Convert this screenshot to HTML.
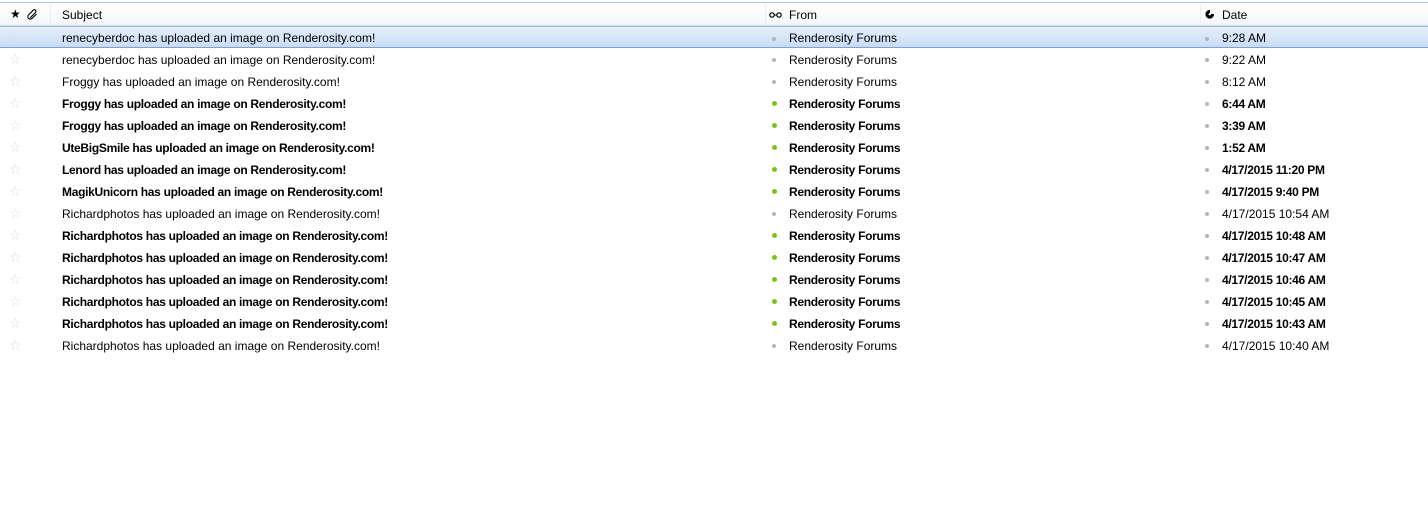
<!DOCTYPE html>
<html><head><meta charset="utf-8"><style>
body{margin:0;width:1428px;height:522px;background:#fff;font-family:"Liberation Sans",sans-serif;font-size:12px;color:#000;overflow:hidden;position:relative}
.top{position:absolute;left:0;top:0;width:1428px;height:2px;background:#fff;border-bottom:1px solid #a9c1dd}
.hdr{position:absolute;left:0;top:3px;width:1428px;height:22px;background:linear-gradient(#fff,#f4f6f9);border-bottom:1px solid #d5dbe3}
.sep{position:absolute;top:4px;height:21px;width:1px;background:#eceef1}
.row{position:absolute;left:0;width:1428px;height:22px}
.sel{background:linear-gradient(#e6f0fb,#c9dcf5);border-top:1px solid #9fbde3;border-bottom:1px solid #7da2ce;box-sizing:border-box}
.t{position:absolute;top:5px;white-space:nowrap}
.sel .t{top:4px}
.b{font-weight:bold;letter-spacing:-0.3px}
.star{position:absolute;left:9px;top:3px;color:#dcdcdc;font-size:14px}
.dot{position:absolute;top:10px;width:4px;height:4px;border-radius:50%;background:#b5b5b5}
.g{background:#7cc01f;width:5px;height:5px;top:9px}
</style></head><body>
<div class="top"></div>
<div class="hdr">
<span class="t" style="left:10px;top:4px;font-size:12px">★</span>
<svg style="position:absolute;left:27px;top:6px" width="11" height="11" viewBox="0 0 11 11"><path d="M3 9 L8.5 3.5 A1.6 1.6 0 0 0 6.2 1.2 L1.5 6 A2.4 2.4 0 0 0 5 9.4 L9.5 5" fill="none" stroke="#000" stroke-width="1.1"/></svg>
<span class="t" style="left:62px;top:5px">Subject</span>
<svg style="position:absolute;left:769px;top:9px" width="13" height="6" viewBox="0 0 13 6"><circle cx="3" cy="3" r="2.2" fill="none" stroke="#000" stroke-width="1.2"/><circle cx="10" cy="3" r="2.2" fill="none" stroke="#000" stroke-width="1.2"/><path d="M5 3h3" stroke="#000"/></svg>
<span class="t" style="left:789px;top:5px">From</span>
<svg style="position:absolute;left:1205px;top:6px" width="10" height="11" viewBox="0 0 10 11"><path d="M5 1 A4.3 4.3 0 1 0 9 5 L6 5 A1.2 1.2 0 1 1 5 4 Z" fill="#000"/></svg>
<span class="t" style="left:1222px;top:5px">Date</span>
</div>
<div class="sep" style="left:50px"></div><div class="sep" style="left:765px"></div><div class="sep" style="left:1200px"></div>
<div id="rows"></div>
<script>
var d=[[0,"renecyberdoc","9:28 AM"],[0,"renecyberdoc","9:22 AM"],[0,"Froggy","8:12 AM"],[1,"Froggy","6:44 AM"],[1,"Froggy","3:39 AM"],[1,"UteBigSmile","1:52 AM"],[1,"Lenord","4/17/2015 11:20 PM"],[1,"MagikUnicorn","4/17/2015 9:40 PM"],[0,"Richardphotos","4/17/2015 10:54 AM"],[1,"Richardphotos","4/17/2015 10:48 AM"],[1,"Richardphotos","4/17/2015 10:47 AM"],[1,"Richardphotos","4/17/2015 10:46 AM"],[1,"Richardphotos","4/17/2015 10:45 AM"],[1,"Richardphotos","4/17/2015 10:43 AM"],[0,"Richardphotos","4/17/2015 10:40 AM"]];
var h="";d.forEach(function(r,i){var b=r[0]?" b":"";
h+='<div class="row'+(i==0?' sel':'')+'" style="top:'+(26+i*22)+'px"><span class="star">☆</span><span class="t'+b+'" style="left:62px">'+r[1]+' has uploaded an image on Renderosity.com!</span><span class="dot'+(r[0]?' g':'')+'" style="left:772px"></span><span class="t'+b+'" style="left:789px">Renderosity Forums</span><span class="dot" style="left:1205px"></span><span class="t'+b+'" style="left:1222px">'+r[2]+'</span></div>';});
document.getElementById("rows").innerHTML=h;
</script>
</body></html>
